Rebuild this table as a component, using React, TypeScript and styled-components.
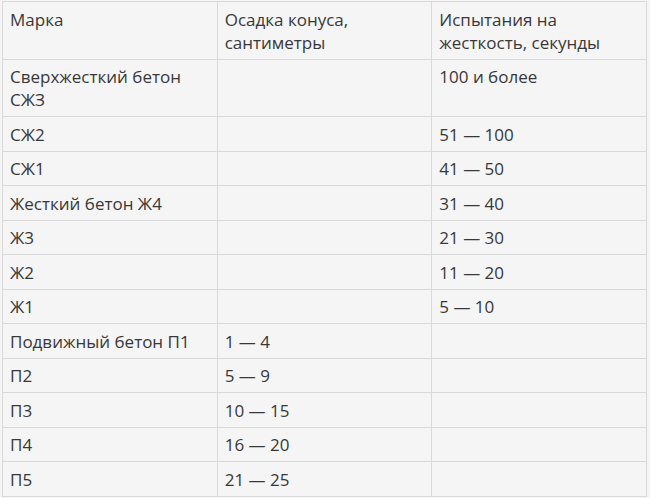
import styled, { createGlobalStyle } from "styled-components";

const GlobalStyle = createGlobalStyle`
  html, body {
    margin: 0;
    padding: 0;
    background: #f5f5f5;
  }
  body {
    font-family: "Open Sans", "Noto Sans", sans-serif;
    color: #383838;
  }
`;

const Wrapper = styled.div`
  padding: 1px 3px 0 2px;
  width: 650px;
  box-sizing: border-box;
`;

const Table = styled.table`
  width: 100%;
  border-collapse: collapse;
  table-layout: fixed;
  background: #f5f5f5;
  font-size: 17px;
  line-height: 23px;
`;

const Cell = styled.td`
  border: 1px solid #d9d9d9;
  padding: 5.5px 7px 5px;
  vertical-align: top;
  text-align: left;
  font-weight: 400;
`;

const HeadCell = styled(Cell).attrs({ as: "th" })``;

const rows: [string, string, string][] = [
  ["Сверхжесткий бетон СЖЗ", "", "100 и более"],
  ["СЖ2", "", "51 — 100"],
  ["СЖ1", "", "41 — 50"],
  ["Жесткий бетон Ж4", "", "31 — 40"],
  ["Ж3", "", "21 — 30"],
  ["Ж2", "", "11 — 20"],
  ["Ж1", "", "5 — 10"],
  ["Подвижный бетон П1", "1 — 4", ""],
  ["П2", "5 — 9", ""],
  ["П3", "10 — 15", ""],
  ["П4", "16 — 20", ""],
  ["П5", "21 — 25", ""],
];

export default function App() {
  return (
    <>
      <GlobalStyle />
      <Wrapper>
        <Table>
          <thead>
            <tr>
              <HeadCell>Марка</HeadCell>
              <HeadCell>Осадка конуса, сантиметры</HeadCell>
              <HeadCell>Испытания на жесткость, секунды</HeadCell>
            </tr>
          </thead>
          <tbody>
            {rows.map((r, i) => (
              <tr key={i}>
                <Cell>{r[0]}</Cell>
                <Cell>{r[1]}</Cell>
                <Cell>{r[2]}</Cell>
              </tr>
            ))}
          </tbody>
        </Table>
      </Wrapper>
    </>
  );
}
